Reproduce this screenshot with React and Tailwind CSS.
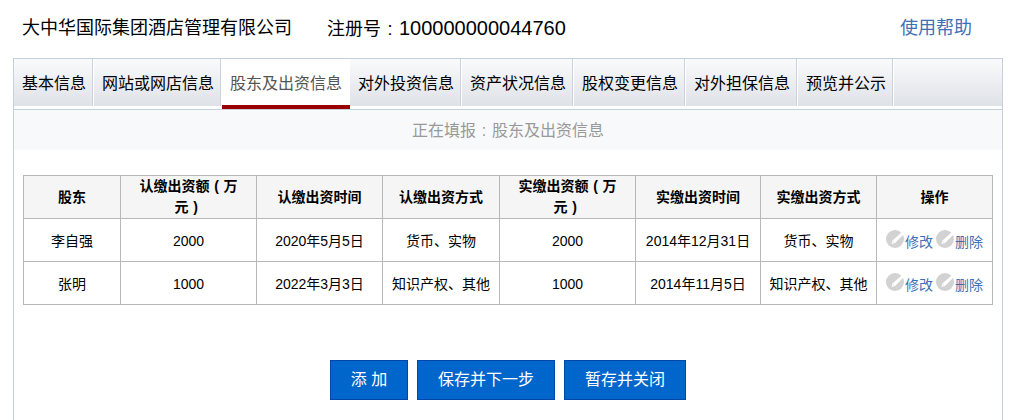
import React from "react";

const tabs = ["基本信息", "网站或网店信息", "股东及出资信息", "对外投资信息", "资产状况信息", "股权变更信息", "对外担保信息", "预览并公示"];

// punctuation in the shot sits centered in its full-width box
function Mark({ children }) {
  return <span className="inline-block w-[1em] text-center">{children}</span>;
}

const columns = [
  { title: "股东", width: "w-[97px]" },
  { title: <>认缴出资额<Mark>(</Mark>万<br />元<Mark>)</Mark></>, width: "w-[136px]" },
  { title: "认缴出资时间", width: "w-[126px]" },
  { title: "认缴出资方式", width: "w-[117px]" },
  { title: <>实缴出资额<Mark>(</Mark>万<br />元<Mark>)</Mark></>, width: "w-[136px]" },
  { title: "实缴出资时间", width: "w-[125px]" },
  { title: "实缴出资方式", width: "w-[116px]" },
  { title: "操作", width: "w-[116px]" },
];

const rows = [
  ["李自强", "2000", "2020年5月5日", "货币、实物", "2000", "2014年12月31日", "货币、实物"],
  ["张明", "1000", "2022年3月3日", "知识产权、其他", "1000", "2014年11月5日", "知识产权、其他"],
];

function PencilBadge() {
  return (
    <svg width="18" height="18" viewBox="0 0 18 18" className="shrink-0">
      <circle cx="9" cy="9" r="9" fill="#d2d2d2" />
      <path d="M15.5 2.5 L17.5 4.5 L9 13 L5.5 14 L6.5 10.5 Z" fill="#fff" />
      <path d="M7.6 11.2 L8.4 12 L6.8 12.6 Z" fill="#d2d2d2" />
    </svg>
  );
}

function ActionLink({ label }) {
  return (
    <span className="flex items-start">
      <PencilBadge />
      <span className="mt-[3px] ml-px text-[#3f6fb5] leading-[18px]">{label}</span>
    </span>
  );
}

export default function App() {
  return (
    <div className="h-[420px] overflow-hidden bg-white text-black font-['Liberation_Sans','Noto_Sans_CJK_SC',sans-serif]">
      {/* top title */}
      <div className="flex h-[58px] items-center pl-[22px] pr-[55px] pb-0.5 text-[18px]">
        <span>大中华国际集团酒店管理有限公司</span>
        <span className="ml-[35px]">注册号<Mark>:</Mark><span className="text-[20px]">100000000044760</span></span>
        <a className="ml-auto text-[#3f6fb5]">使用帮助</a>
      </div>

      <div className="ml-[13px] w-[990px] border border-b-0 border-[#c5d0de]">
        {/* tabs */}
        <div className="h-[51px] border-b border-[#c5d0de]">
          <div className="flex h-[47px] bg-gradient-to-b from-[#f9fafc] to-[#dfe2e7]">
            {tabs.map((tab, i) =>
              i === 2 ? (
                <div key={tab} className="h-[50px] border-b-4 border-[#990000] bg-white px-2 pt-[14px] text-[16px] leading-[22px] text-[#555]">
                  {tab}
                </div>
              ) : (
                <div key={tab} className="h-[47px] border-r border-white pl-2 pr-[7px] pt-[14px] text-[16px] leading-[22px] shadow-[inset_-1px_0_0_#ccd3dc]">
                  {tab}
                </div>
              )
            )}
          </div>
        </div>

        <div className="h-10 bg-[#f8f9fb] pt-px text-center text-[16px] leading-10 text-[#999]">
          正在填报<Mark>:</Mark>股东及出资信息
        </div>

        <div className="px-[9px] pt-[25px]">
          <table className="w-[970px] table-fixed border-collapse text-center text-[14px]">
            <thead>
              <tr className="h-[43px] bg-[#f5f5f5]">
                {columns.map((col, i) => (
                  <th key={i} className={`${col.width} border border-[#b8b8b8] px-2 font-bold leading-[21px]`}>
                    {col.title}
                  </th>
                ))}
              </tr>
            </thead>
            <tbody>
              {rows.map((row) => (
                <tr key={row[0]} className="h-[43px]">
                  {row.map((cell, i) => (
                    <td key={i} className="border border-[#b8b8b8] px-1 pt-0.5">{cell}</td>
                  ))}
                  <td className="border border-[#b8b8b8]">
                    <div className="flex justify-center gap-[3px]">
                      <ActionLink label="修改" />
                      <ActionLink label="删除" />
                    </div>
                  </td>
                </tr>
              ))}
            </tbody>
          </table>
        </div>

        <div className="mt-[55px] flex justify-center gap-[9px] pb-10 text-[16px] text-white">
          <button className="h-10 w-[78px] border border-[#0047a8] bg-[#0066cc]">添 加</button>
          <button className="h-10 w-[138px] border border-[#0047a8] bg-[#0066cc]">保存并下一步</button>
          <button className="h-10 w-[122px] border border-[#0047a8] bg-[#0066cc]">暂存并关闭</button>
        </div>
      </div>
    </div>
  );
}
